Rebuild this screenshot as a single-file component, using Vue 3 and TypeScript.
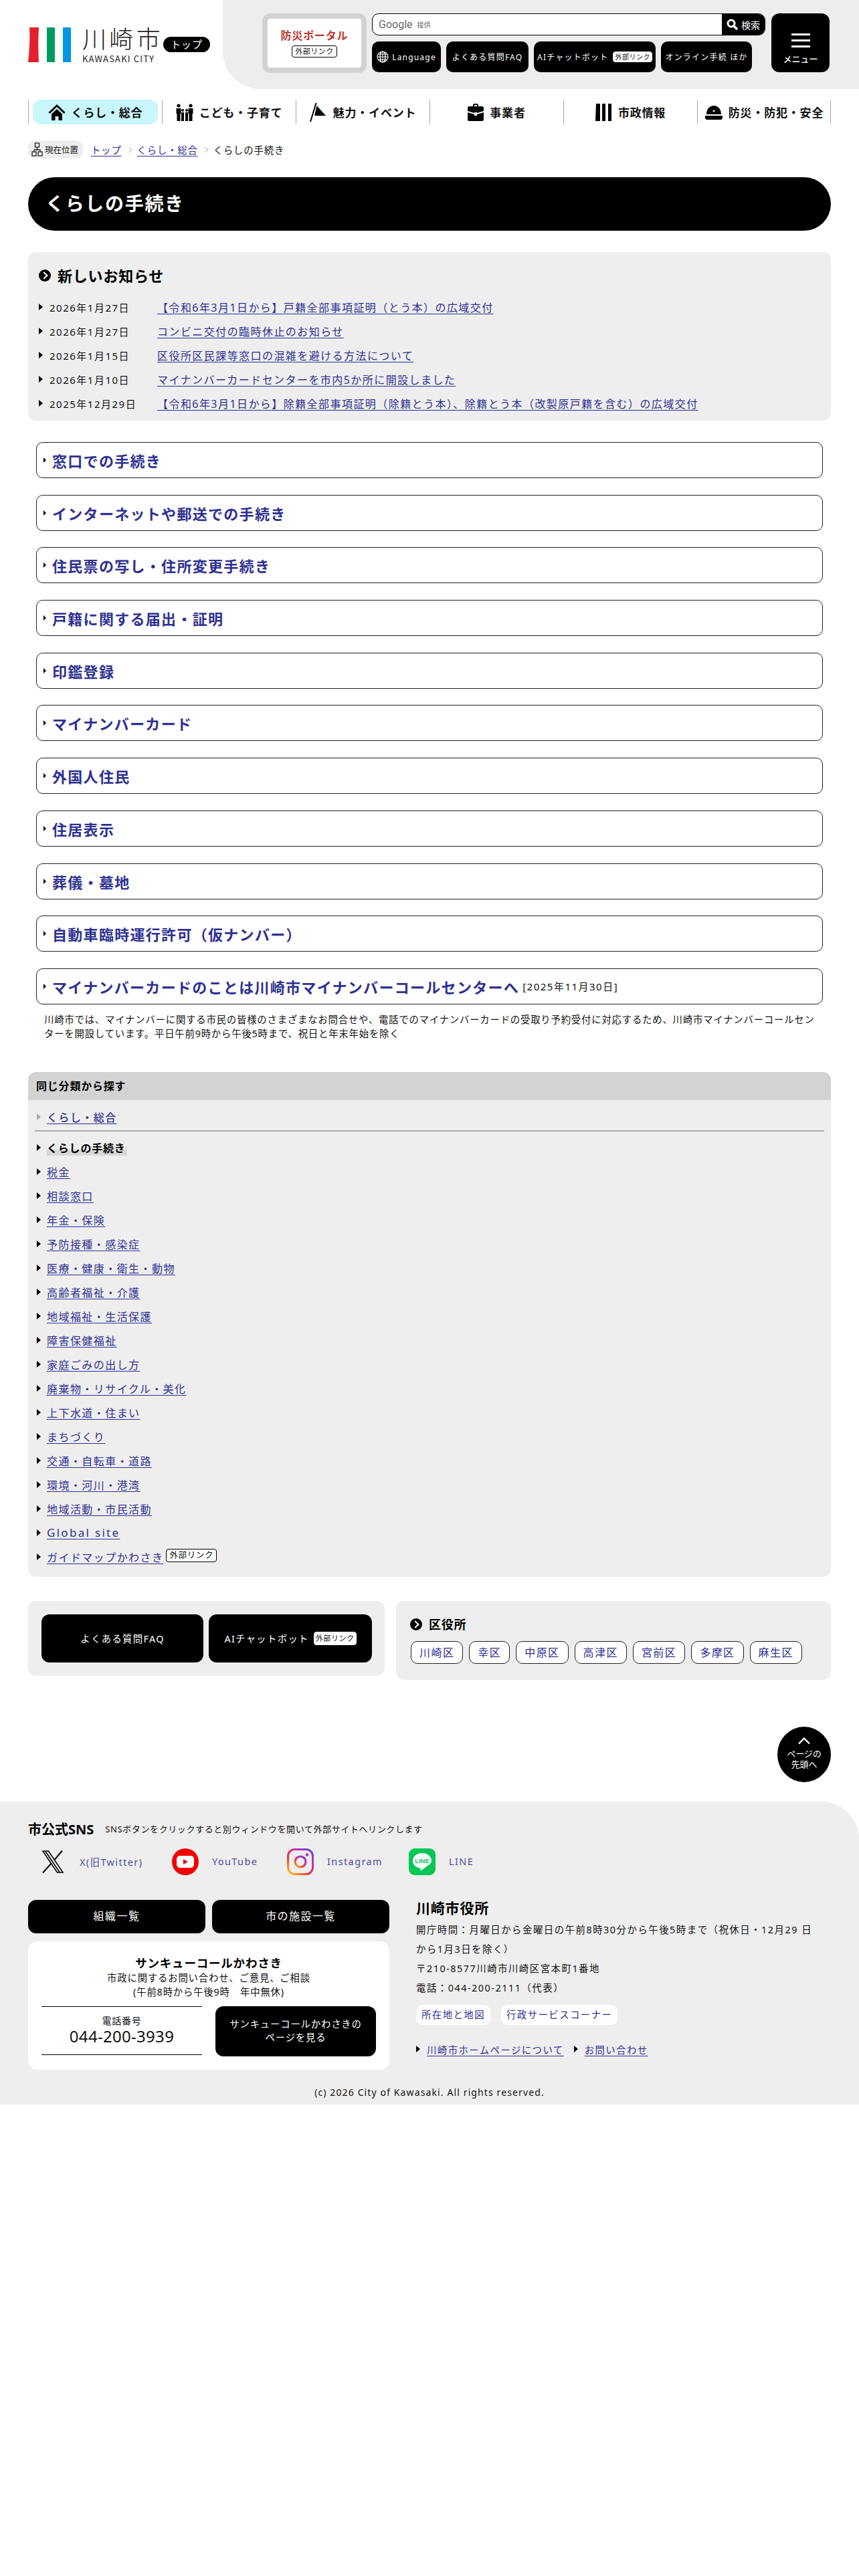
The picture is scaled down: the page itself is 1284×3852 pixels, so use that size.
<script setup lang="ts">
const navItems = [
  { label: 'くらし・総合', icon: 'home', active: true },
  { label: 'こども・子育て', icon: 'family', active: false },
  { label: '魅力・イベント', icon: 'flag', active: false },
  { label: '事業者', icon: 'case', active: false },
  { label: '市政情報', icon: 'bars', active: false },
  { label: '防災・防犯・安全', icon: 'helmet', active: false },
]

const news = [
  { date: '2026年1月27日', title: '【令和6年3月1日から】戸籍全部事項証明（とう本）の広域交付' },
  { date: '2026年1月27日', title: 'コンビニ交付の臨時休止のお知らせ' },
  { date: '2026年1月15日', title: '区役所区民課等窓口の混雑を避ける方法について' },
  { date: '2026年1月10日', title: 'マイナンバーカードセンターを市内5か所に開設しました' },
  { date: '2025年12月29日', title: '【令和6年3月1日から】除籍全部事項証明（除籍とう本）、除籍とう本（改製原戸籍を含む）の広域交付' },
]

const sections = [
  '窓口での手続き',
  'インターネットや郵送での手続き',
  '住民票の写し・住所変更手続き',
  '戸籍に関する届出・証明',
  '印鑑登録',
  'マイナンバーカード',
  '外国人住民',
  '住居表示',
  '葬儀・墓地',
  '自動車臨時運行許可（仮ナンバー）',
]

const categories = [
  '税金',
  '相談窓口',
  '年金・保険',
  '予防接種・感染症',
  '医療・健康・衛生・動物',
  '高齢者福祉・介護',
  '地域福祉・生活保護',
  '障害保健福祉',
  '家庭ごみの出し方',
  '廃棄物・リサイクル・美化',
  '上下水道・住まい',
  'まちづくり',
  '交通・自転車・道路',
  '環境・河川・港湾',
  '地域活動・市民活動',
]

const wards = ['川崎区', '幸区', '中原区', '高津区', '宮前区', '多摩区', '麻生区']
</script>

<template>
  <div class="page">
    <header class="site-head">
      <div class="logo">
        <svg class="logo-mark" width="64" height="52" viewBox="0 0 64 52" aria-hidden="true">
          <path d="M2 0h14c-1 18-1 34 0 52H0C2 34 3 16 2 0z" fill="#e5202e" />
          <rect x="28" y="0" width="12" height="52" fill="#009b63" />
          <rect x="52" y="0" width="12" height="52" fill="#0097e0" />
        </svg>
        <div class="logo-text">
          <span class="logo-ja">川崎市</span>
          <span class="logo-en">KAWASAKI CITY</span>
        </div>
        <span class="top-pill">トップ</span>
      </div>
      <div class="head-tools">
        <a class="portal">
          <span class="portal-name">防災ポータル</span>
          <span class="ext-tag">外部リンク</span>
        </a>
        <div class="tool-col">
          <div class="search">
            <span class="google">Google</span>
            <span class="google-by">提供</span>
            <span class="search-input"></span>
            <span class="search-btn">
              <svg width="17" height="17" viewBox="0 0 17 17" aria-hidden="true">
                <circle cx="7" cy="7" r="5" fill="none" stroke="#fff" stroke-width="3" />
                <path d="M10.5 10.5L15 15" stroke="#fff" stroke-width="3.4" stroke-linecap="round" />
              </svg>
              検索
            </span>
          </div>
          <div class="tool-links">
            <a class="tool-btn lang">
              <svg width="18" height="18" viewBox="0 0 18 18" aria-hidden="true">
                <g fill="none" stroke="#fff" stroke-width="1.1">
                  <circle cx="9" cy="9" r="8" />
                  <ellipse cx="9" cy="9" rx="4" ry="8" />
                  <path d="M9 1v16M1 9h16M2 5h14M2 13h14M5.5 2v14M12.5 2v14" />
                </g>
              </svg>
              Language
            </a>
            <a class="tool-btn faq">よくある質問FAQ</a>
            <a class="tool-btn ai">AIチャットボット<span class="ext-tag white">外部リンク</span></a>
            <a class="tool-btn online">オンライン手続 ほか</a>
          </div>
        </div>
        <button type="button" class="menu-btn">
          <span class="burger"><i></i><i></i><i></i></span>
          メニュー
        </button>
      </div>
    </header>

    <nav class="global-nav">
      <a v-for="item in navItems" :key="item.label" class="nav-cell">
        <span class="nav-inner" :class="{ active: item.active }">
          <svg v-if="item.icon === 'home'" width="26" height="26" viewBox="0 0 26 26" aria-hidden="true">
            <path d="M13 1L0.5 13l2 2L13 5l10.500 10 2-2z M5 15.500L13 8l8 7.500V25h-5.500v-6h-5v6H5z" fill="#000" />
          </svg>
          <svg v-else-if="item.icon === 'family'" width="26" height="26" viewBox="0 0 26 26" aria-hidden="true">
            <g fill="#000">
              <circle cx="4" cy="3" r="2.600" /><circle cx="22" cy="3" r="2.600" />
              <circle cx="10" cy="10" r="2" /><circle cx="16" cy="10" r="2" />
              <path d="M0.500 7h7v8H6.500v11h-5V15h-1z M18.500 7h7v8h-1v11h-5V15h-1z M8 13h4v13H8z M14 13h4v13h-4z" />
            </g>
          </svg>
          <svg v-else-if="item.icon === 'flag'" width="26" height="30" viewBox="0 0 26 30" aria-hidden="true">
            <path d="M1 29L9.500 1" stroke="#000" stroke-width="2" fill="none" />
            <path d="M10.500 5L24 20H7z" fill="#000" />
          </svg>
          <svg v-else-if="item.icon === 'case'" width="24" height="26" viewBox="0 0 24 26" aria-hidden="true">
            <path d="M8 4V2.500C8 1 9 0 10.500 0h3C15 0 16 1 16 2.500V4h-2V2h-4v2z M2 4h20c1 0 2 1 2 2v5l-10 3v-1h-4v1L0 11V6c0-1 1-2 2-2z M0 13l10 3v2h4v-2l10-3v11c0 1-1 2-2 2H2c-1 0-2-1-2-2z" fill="#000" />
          </svg>
          <svg v-else-if="item.icon === 'bars'" width="25" height="26" viewBox="0 0 25 26" aria-hidden="true">
            <path d="M1 0h6v26H0zM10 0h5v26h-5zM19 0h5v26h-5z" fill="#000" />
          </svg>
          <svg v-else width="26" height="22" viewBox="0 0 26 22" aria-hidden="true">
            <path d="M2 14C2 6 7 1 13 1s11 5 11 13zM0 16h26v3c0 1-1 3-3 3H3c-2 0-3-2-3-3z" fill="#000" />
            <path d="M11.500 9h3M13 7.500v3" stroke="#fff" stroke-width="1.300" />
          </svg>
          {{ item.label }}
        </span>
      </a>
    </nav>

    <div class="crumbs">
      <span class="crumb-chip">
        <svg width="17" height="21" viewBox="0 0 17 21" aria-hidden="true">
          <g fill="none" stroke="#222" stroke-width="1.300">
            <rect x="5.500" y="1" width="6" height="6" />
            <rect x="1" y="14" width="6" height="6" />
            <rect x="10" y="14" width="6" height="6" />
            <path d="M8.500 7v4M4 14v-3h9v3" />
          </g>
        </svg>
        現在位置
      </span>
      <a class="link">トップ</a>
      <span class="crumb-sep"></span>
      <a class="link">くらし・総合</a>
      <span class="crumb-sep"></span>
      <span>くらしの手続き</span>
    </div>

    <main class="main">
      <h1 class="page-title">くらしの手続き</h1>

      <section class="news">
        <h2 class="circle-head big">
          <span class="circle-ico"></span>
          新しいお知らせ
        </h2>
        <ul class="news-list">
          <li v-for="row in news" :key="row.title">
            <span class="tri"></span>
            <span class="news-date">{{ row.date }}</span>
            <a class="link wide">{{ row.title }}</a>
          </li>
        </ul>
      </section>

      <div class="sections">
        <a v-for="name in sections" :key="name" class="section-btn">
          <span class="tri"></span>
          <span class="section-name">{{ name }}</span>
        </a>
        <a class="section-btn last">
          <span class="tri"></span>
          <span class="section-name">マイナンバーカードのことは川崎市マイナンバーコールセンターへ</span>
          <span class="section-date">[2025年11月30日]</span>
        </a>
        <p class="section-note">
          川崎市では、マイナンバーに関する市民の皆様のさまざまなお問合せや、電話でのマイナンバーカードの受取り予約受付に対応するため、川崎市マイナンバーコールセンターを開設しています。平日午前9時から午後5時まで、祝日と年末年始を除く
        </p>
      </div>

      <section class="same-cat">
        <h2 class="same-head">同じ分類から探す</h2>
        <div class="same-body">
          <div class="same-parent">
            <span class="tri gray"></span>
            <a class="link wide medium">くらし・総合</a>
          </div>
          <ul class="same-list">
            <li>
              <span class="tri"></span>
              <strong class="current">くらしの手続き</strong>
            </li>
            <li v-for="name in categories" :key="name">
              <span class="tri"></span>
              <a class="link wide">{{ name }}</a>
            </li>
            <li>
              <span class="tri"></span>
              <a class="link latin">Global site</a>
            </li>
            <li>
              <span class="tri"></span>
              <a class="link wide">ガイドマップかわさき</a>
              <span class="ext-tag guide">外部リンク</span>
            </li>
          </ul>
        </div>
      </section>

      <div class="bottom-row">
        <div class="quick">
          <a class="quick-btn faq-btn">よくある質問FAQ</a>
          <a class="quick-btn ai-btn">AIチャットボット<span class="ext-tag white">外部リンク</span></a>
        </div>
        <section class="wards">
          <h2 class="circle-head">
            <span class="circle-ico"></span>
            区役所
          </h2>
          <div class="ward-list">
            <a v-for="ward in wards" :key="ward" class="ward">{{ ward }}</a>
          </div>
        </section>
      </div>

      <div class="to-top-row">
        <a class="to-top">
          <svg width="20" height="12" viewBox="0 0 20 12" aria-hidden="true">
            <path d="M2 10.500L10 2.500l8 8" fill="none" stroke="#fff" stroke-width="2.400" />
          </svg>
          <span>ページの<br />先頭へ</span>
        </a>
      </div>
    </main>

    <footer class="footer">
      <div class="sns-title">
        <strong>市公式SNS</strong>
        <span>SNSボタンをクリックすると別ウィンドウを開いて外部サイトへリンクします</span>
      </div>
      <div class="sns-list">
        <a class="sns x">
          <svg width="34" height="40" viewBox="0 0 34 40" aria-hidden="true">
            <path d="M2 4h8.500L32 36h-8.500z" fill="none" stroke="#000" stroke-width="1.600" />
            <path d="M31 3.500L19 17.500M15 22L2 36.500" stroke="#000" stroke-width="2" />
            <path d="M6 4.500L27 35.500" stroke="#000" stroke-width="1.600" />
          </svg>
          <span class="sns-name">X(旧Twitter)</span>
        </a>
        <a class="sns yt">
          <svg width="40" height="40" viewBox="0 0 40 40" aria-hidden="true">
            <circle cx="20" cy="20" r="20" fill="#f00000" />
            <rect x="7" y="11" width="26" height="18" rx="5" fill="#fff" />
            <path d="M17 16l7 4-7 4z" fill="#f00000" />
          </svg>
          <span class="sns-name">YouTube</span>
        </a>
        <a class="sns ig">
          <svg width="40" height="40" viewBox="0 0 40 40" aria-hidden="true">
            <defs>
              <linearGradient id="ig-grad" x1="0.100" y1="1" x2="0.900" y2="0">
                <stop offset="0" stop-color="#fdc21a" />
                <stop offset="0.350" stop-color="#f2343f" />
                <stop offset="0.700" stop-color="#c32fb0" />
                <stop offset="1" stop-color="#6a3de0" />
              </linearGradient>
            </defs>
            <rect x="1.500" y="1.500" width="37" height="37" rx="10" fill="none" stroke="url(#ig-grad)" stroke-width="3" />
            <circle cx="20" cy="20" r="8" fill="none" stroke="url(#ig-grad)" stroke-width="3.200" />
            <circle cx="30" cy="9.500" r="2.200" fill="#b52fc0" />
          </svg>
          <span class="sns-name">Instagram</span>
        </a>
        <a class="sns line-app">
          <svg width="40" height="40" viewBox="0 0 40 40" aria-hidden="true">
            <rect width="40" height="40" rx="9" fill="#06c755" />
            <path d="M20 7c-8 0-14 5-14 11.500 0 5.500 4.500 10 11 11 .5.500 0 3 .5 3.500s5-3 8.500-5.500c4-2.500 8-5 8-9C34 12 28 7 20 7z" fill="#fff" />
            <text x="20" y="22" class="line-word" text-anchor="middle">LINE</text>
          </svg>
          <span class="sns-name">LINE</span>
        </a>
      </div>

      <div class="foot-cols">
        <div class="foot-left">
          <div class="foot-btns">
            <a class="foot-btn">組織一覧</a>
            <a class="foot-btn">市の施設一覧</a>
          </div>
          <div class="thanks">
            <h3 class="thanks-name">サンキューコールかわさき</h3>
            <p class="thanks-desc">市政に関するお問い合わせ、ご意見、ご相談<br />(午前8時から午後9時　年中無休)</p>
            <div class="thanks-row">
              <div class="tel">
                <span class="tel-label">電話番号</span>
                <span class="tel-num">044-200-3939</span>
              </div>
              <a class="thanks-btn">サンキューコールかわさきの<br />ページを見る</a>
            </div>
          </div>
        </div>
        <div class="foot-right">
          <h3 class="city-name">川崎市役所</h3>
          <p class="city-info">
            開庁時間：月曜日から金曜日の午前8時30分から午後5時まで（祝休日・12月29 日<br />
            から1月3日を除く）<br />
            〒210-8577川崎市川崎区宮本町1番地<br />
            電話：044-200-2111（代表）
          </p>
          <div class="city-pills">
            <a class="city-pill">所在地と地図</a>
            <a class="city-pill">行政サービスコーナー</a>
          </div>
          <div class="city-links">
            <span class="tri"></span><a class="link">川崎市ホームページについて</a>
            <span class="tri second"></span><a class="link">お問い合わせ</a>
          </div>
        </div>
      </div>
      <p class="copyright">(c) 2026 City of Kawasaki. All rights reserved.</p>
    </footer>
  </div>
</template>

<style>
html,
body {
  margin: 0;
  background: #fff;
}
</style>

<style scoped>
.page {
  min-height: 3852px;
  color: #111;
  font-family: "Noto Sans", "Noto Sans CJK JP", sans-serif;
  font-size: 16px;
  letter-spacing: 0.05em;
}

a {
  text-decoration: none;
}

h1,
h2,
h3,
p,
ul {
  margin: 0;
  padding: 0;
}

ul {
  list-style: none;
}

.link {
  color: #2e3192;
  text-decoration: underline;
  text-underline-offset: 3px;
}

.link.wide {
  letter-spacing: 0.09em;
}

.link.latin {
  font-size: 17px;
  letter-spacing: 2.3px;
}

.link.medium {
  font-weight: 500;
}

.tri {
  display: inline-block;
  flex: none;
  width: 0;
  height: 0;
  border-top: 5px solid transparent;
  border-bottom: 5px solid transparent;
  border-left: 6px solid #000;
}

.tri.gray {
  border-left-color: #aaa;
}

.ext-tag {
  display: inline-block;
  padding: 0 4px;
  border: 1px solid #000;
  border-radius: 4px;
  background: #fff;
  color: #111;
  font-size: 12px;
  line-height: 20px;
  letter-spacing: 0.05em;
  white-space: nowrap;
}

.ext-tag.white {
  border-color: #fff;
  line-height: 14px;
  padding: 0 2px;
}

/* header */
.site-head {
  display: flex;
  height: 133px;
}

.logo {
  display: flex;
  align-items: flex-start;
  width: 333px;
  padding: 41px 0 0 42px;
  box-sizing: border-box;
}

.logo-mark {
  flex: none;
}

.logo-text {
  display: flex;
  flex-direction: column;
  margin-left: 17px;
  width: 114px;
}

.logo-ja {
  color: #222;
  font-size: 36px;
  font-weight: 300;
  line-height: 36px;
  letter-spacing: 0.12em;
  white-space: nowrap;
}

.logo-en {
  margin-top: 4px;
  color: #222;
  font-family: "Noto Sans CJK JP", sans-serif;
  font-size: 13px;
  line-height: 14px;
  letter-spacing: 0.09em;
  white-space: nowrap;
}

.top-pill {
  width: 70px;
  height: 23px;
  margin: 14px 0 0 7px;
  border-radius: 12px;
  background: #000;
  color: #fff;
  font-size: 15px;
  line-height: 23px;
  text-align: center;
}

.head-tools {
  display: flex;
  flex: 1;
  gap: 8px;
  padding: 20px 44px 0 59px;
  border-bottom-left-radius: 56px;
  background: #ededed;
}

.portal {
  display: flex;
  flex: none;
  flex-direction: column;
  align-items: center;
  box-sizing: border-box;
  width: 156px;
  height: 89px;
  padding-top: 13px;
  border: 8px solid #d2d2d2;
  border-radius: 12px;
  background: #fff;
}

.portal-name {
  margin-bottom: 3px;
  color: #c1342f;
  font-size: 16px;
  font-weight: 700;
  line-height: 24px;
}

.portal .ext-tag {
  font-size: 11px;
  line-height: 16px;
}

.tool-col {
  display: flex;
  flex-direction: column;
  gap: 9px;
  width: 588px;
}

.search {
  display: flex;
  align-items: center;
  overflow: hidden;
  box-sizing: border-box;
  height: 33px;
  padding-left: 9px;
  border: 1px solid #000;
  border-radius: 10px;
  background: #fff;
}

.google {
  color: #6b6b6b;
  font-family: "Roboto", sans-serif;
  font-size: 16px;
  letter-spacing: 0;
}

.google-by {
  margin-left: 7px;
  color: #666;
  font-size: 10px;
  letter-spacing: 0;
}

.search-input {
  flex: 1;
}

.search-btn {
  display: flex;
  align-items: center;
  justify-content: center;
  gap: 5px;
  width: 64px;
  height: 33px;
  background: #000;
  color: #fff;
  font-size: 14px;
  letter-spacing: 0;
}

.tool-links {
  display: flex;
  gap: 8px;
}

.tool-btn {
  display: flex;
  flex: none;
  align-items: center;
  justify-content: center;
  gap: 5px;
  height: 46px;
  border-radius: 10px;
  background: #000;
  color: #fff;
  font-size: 12px;
  letter-spacing: 0.1em;
  white-space: nowrap;
}

.lang {
  width: 103px;
}

.faq {
  width: 123px;
}

.ai {
  width: 182px;
  gap: 7px;
}

.ai .ext-tag {
  font-size: 10px;
}

.online {
  width: 136px;
}

.menu-btn {
  display: flex;
  flex: none;
  flex-direction: column;
  align-items: center;
  width: 87px;
  height: 88px;
  margin-left: 1px;
  padding: 30px 0 0;
  border: 0;
  border-radius: 12px;
  background: #000;
  color: #fff;
  font-family: inherit;
  font-size: 13px;
  font-weight: 500;
  letter-spacing: 0;
}

.burger {
  display: flex;
  flex-direction: column;
  gap: 6px;
  margin-bottom: 7px;
}

.burger i {
  display: block;
  width: 28px;
  height: 3px;
  background: #fff;
}

/* global nav */
.global-nav {
  display: grid;
  grid-template-columns: repeat(6, 200px);
  width: 1200px;
  height: 37px;
  margin: 16px 0 0 42px;
  border-right: 1px solid #aaa;
  box-sizing: border-box;
}

.nav-cell {
  display: flex;
  padding: 0 6px;
  border-left: 1px solid #aaa;
}

.nav-inner {
  display: flex;
  flex: 1;
  align-items: center;
  justify-content: center;
  gap: 9px;
  border-radius: 12px;
  color: #111;
  font-size: 17px;
  font-weight: 700;
  white-space: nowrap;
}

.nav-inner.active {
  background: #c8f7fb;
}

/* breadcrumb */
.crumbs {
  display: flex;
  align-items: center;
  height: 27px;
  margin: 24px 0 0 42px;
  font-size: 14.400px;
}

.crumb-chip {
  display: flex;
  align-items: center;
  gap: 3px;
  box-sizing: border-box;
  width: 82px;
  height: 27px;
  margin-right: 12px;
  padding-left: 5px;
  border-radius: 10px;
  background: #eee;
  font-size: 12.500px;
  letter-spacing: 0;
}

.crumb-sep {
  width: 5px;
  height: 5px;
  margin: 0 9px 0 8px;
  border-top: 1px solid #bbb;
  border-right: 1px solid #bbb;
  transform: rotate(45deg);
}

/* main column */
.main {
  padding: 0 42px;
}

.page-title {
  height: 80px;
  margin-top: 28px;
  padding-left: 26px;
  border-radius: 40px;
  background: #000;
  color: #fff;
  font-size: 28px;
  font-weight: 700;
  line-height: 78px;
  letter-spacing: 0.06em;
}

.news {
  box-sizing: border-box;
  height: 252px;
  margin-top: 32px;
  padding: 22px 16px 0;
  border-radius: 12px;
  background: #eee;
}

.circle-head {
  display: flex;
  align-items: center;
  gap: 10px;
  color: #000;
  font-size: 20px;
  font-weight: 700;
  line-height: 26px;
}

.circle-head.big {
  font-size: 22px;
}

.circle-ico {
  position: relative;
  flex: none;
  width: 18px;
  height: 18px;
  border-radius: 50%;
  background: #000;
}

.circle-ico::after {
  position: absolute;
  top: 5px;
  left: 4px;
  width: 6px;
  height: 6px;
  border-top: 2px solid #fff;
  border-right: 2px solid #fff;
  transform: rotate(45deg);
  content: '';
}

.news-list {
  margin-top: 16px;
}

.news-list li {
  display: flex;
  align-items: center;
  height: 36px;
}

.news-date {
  width: 161px;
  margin-left: 10px;
  font-size: 15px;
  letter-spacing: 0.1em;
}

.news-list .link {
  white-space: nowrap;
}

/* sections */
.sections {
  margin: 32px 12px 0;
}

.section-btn {
  display: flex;
  align-items: center;
  box-sizing: border-box;
  height: 54px;
  margin-bottom: 24.700px;
  padding-left: 10px;
  border: 1px solid #222;
  border-radius: 10px;
  background: #fff;
}

.section-btn .tri {
  border-top-width: 4px;
  border-bottom-width: 4px;
  border-left-width: 4px;
}

.section-btn.last {
  margin-bottom: 0;
}

.section-name {
  margin-left: 9px;
  color: #2e3192;
  font-size: 22px;
  font-weight: 700;
  letter-spacing: 1.300px;
}

.section-date {
  margin-left: 5px;
  font-size: 15px;
  letter-spacing: 0.1em;
}

.section-note {
  margin-top: 12px;
  padding: 0 8px 0 12px;
  font-size: 14.400px;
  line-height: 21.500px;
  letter-spacing: 0.78px;
}

/* same category */
.same-cat {
  overflow: hidden;
  height: 755px;
  margin-top: 46px;
  border-radius: 12px;
  background: #eee;
}

.same-head {
  height: 42px;
  padding-left: 12px;
  background: #d3d3d3;
  color: #000;
  font-size: 16px;
  font-weight: 700;
  line-height: 42px;
}

.same-body {
  padding: 0 10px;
}

.same-parent {
  display: flex;
  align-items: center;
  gap: 9px;
  height: 47px;
  padding: 6px 0 0 3px;
  box-sizing: border-box;
  border-bottom: 2px solid #aaa;
}

.same-list {
  margin-top: 6px;
}

.same-list li {
  display: flex;
  align-items: center;
  gap: 9px;
  height: 36px;
  padding-left: 3px;
  color: #2e3192;
}

.current {
  padding-right: 2px;
  background: linear-gradient(transparent 62%, #d8d8d8 62%);
  color: #000;
  font-weight: 700;
}

.ext-tag.guide {
  margin: 0 0 4px -5px;
  line-height: 18px;
  font-size: 12.500px;
}

/* quick + wards */
.bottom-row {
  display: flex;
  align-items: flex-start;
  gap: 17px;
  margin-top: 36px;
}

.quick {
  display: flex;
  flex: none;
  gap: 8px;
  box-sizing: border-box;
  width: 533px;
  height: 112px;
  padding: 20px 19px 0 20px;
  border-radius: 12px;
  background: #eee;
}

.quick-btn {
  display: flex;
  align-items: center;
  justify-content: center;
  gap: 7px;
  height: 72px;
  border-radius: 12px;
  background: #000;
  color: #fff;
  font-size: 14.400px;
  letter-spacing: 0.09em;
  white-space: nowrap;
}

.faq-btn {
  width: 242px;
}

.ai-btn {
  width: 244px;
}

.quick-btn .ext-tag {
  font-size: 11px;
  line-height: 18px;
}

.wards {
  flex: 1;
  box-sizing: border-box;
  height: 118px;
  padding: 22px 21px 0;
  border-radius: 12px;
  background: #eee;
}

.wards .circle-head {
  font-size: 18px;
}

.ward-list {
  display: flex;
  gap: 9px;
  margin: 12px 0 0 1px;
}

.ward {
  box-sizing: border-box;
  height: 34px;
  padding: 0 12px;
  border: 1px solid #222;
  border-radius: 10px;
  background: #fff;
  color: #2e3192;
  line-height: 32px;
  letter-spacing: 0.09em;
}

.to-top-row {
  display: flex;
  justify-content: flex-end;
  margin-top: 70px;
}

.to-top {
  display: flex;
  flex-direction: column;
  align-items: center;
  box-sizing: border-box;
  width: 80px;
  height: 83px;
  padding-top: 15px;
  border-radius: 50%;
  background: #000;
  color: #fff;
  font-size: 13px;
  line-height: 16px;
  text-align: center;
  letter-spacing: 0;
}

.to-top span {
  margin-top: 5px;
}

/* footer */
.footer {
  box-sizing: border-box;
  height: 453px;
  margin-top: 29px;
  padding: 28px 42px 0;
  border-top-right-radius: 56px;
  background: #eee;
}

.sns-title {
  display: flex;
  align-items: center;
  gap: 17px;
  height: 26px;
}

.sns-title strong {
  color: #000;
  font-size: 20px;
  font-weight: 700;
  letter-spacing: 0;
}

.sns-title span {
  font-size: 13px;
  letter-spacing: 0.6px;
}

.sns-list {
  display: flex;
  margin: 16px 0 0 20px;
}

.sns {
  display: flex;
  align-items: center;
  height: 40px;
  gap: 23px;
}

.sns.yt,
.sns.ig,
.sns.line-app {
  gap: 20px;
}

.x {
  width: 195px;
}

.yt {
  width: 172px;
}

.ig {
  width: 182px;
}

.sns-name {
  color: #2e3192;
  font-size: 14.400px;
  letter-spacing: 0.1em;
  opacity: 0.85;
}

.line-word {
  fill: #06c755;
  font-family: "Liberation Sans", sans-serif;
  font-size: 9.500px;
  font-weight: 700;
  letter-spacing: 0;
}

.foot-cols {
  display: flex;
  gap: 40px;
  margin-top: 37px;
}

.foot-left {
  flex: none;
  width: 540px;
}

.foot-btns {
  display: flex;
  gap: 10px;
}

.foot-btn {
  flex: 1;
  height: 50px;
  border-radius: 12px;
  background: #000;
  color: #fff;
  font-size: 16px;
  line-height: 49px;
  text-align: center;
  letter-spacing: 0.09em;
}

.thanks {
  box-sizing: border-box;
  height: 192px;
  margin-top: 12px;
  padding: 21px 20px 0;
  border-radius: 14px;
  background: #fff;
  text-align: center;
}

.thanks-name {
  color: #000;
  font-size: 17.500px;
  font-weight: 700;
  line-height: 22px;
}

.thanks-desc {
  margin-top: 1px;
  font-size: 14.400px;
  line-height: 21px;
}

.thanks-row {
  display: flex;
  gap: 20px;
  margin-top: 11px;
}

.tel {
  display: flex;
  flex: none;
  flex-direction: column;
  justify-content: center;
  box-sizing: border-box;
  width: 240px;
  height: 73px;
  padding-bottom: 2px;
  border-top: 1px solid #000;
  border-bottom: 1px solid #000;
}

.tel-label {
  font-size: 14px;
  line-height: 20px;
}

.tel-num {
  font-size: 24px;
  line-height: 26px;
  letter-spacing: 0.3px;
}

.thanks-btn {
  display: flex;
  flex: none;
  align-items: center;
  justify-content: center;
  width: 240px;
  height: 75px;
  border-radius: 12px;
  background: #000;
  color: #fff;
  font-size: 14.400px;
  line-height: 20px;
}

.city-name {
  color: #000;
  font-size: 21px;
  font-weight: 700;
  line-height: 24px;
}

.city-info {
  margin-top: 6px;
  font-size: 14.400px;
  line-height: 29px;
  letter-spacing: 0.105em;
  white-space: nowrap;
}

.city-pills {
  display: flex;
  gap: 16px;
  margin-top: 11px;
}

.city-pill {
  height: 30px;
  padding: 0 8px;
  border-radius: 10px;
  background: #fff;
  color: #2e3192;
  font-size: 14.400px;
  line-height: 29px;
  letter-spacing: 0.1em;
  white-space: nowrap;
}

.city-links {
  display: flex;
  align-items: center;
  gap: 10px;
  margin-top: 26px;
  font-size: 14.400px;
  letter-spacing: 0.1em;
}

.tri.second {
  margin-left: 5px;
}

.copyright {
  margin-top: 24px;
  font-size: 14px;
  line-height: 20px;
  text-align: center;
  letter-spacing: 0.08em;
}
</style>
